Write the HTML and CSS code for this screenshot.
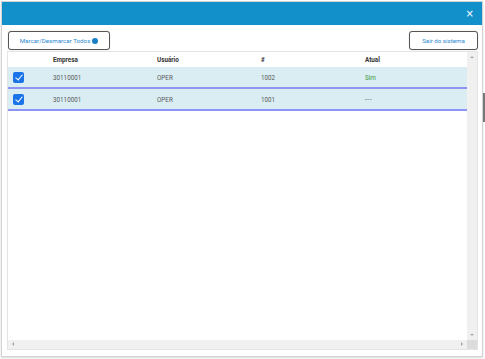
FILE: index.html
```html
<!DOCTYPE html>
<html lang="pt">
<head>
    <meta charset="UTF-8">
    <title>Sessões</title>
    <link rel="stylesheet" href="styles.css">
</head>
<body>
<div class="modal">
    <div class="modal-head">
        <span class="close">&times;</span>
    </div>
    <div class="modal-body">
        <div class="toolbar">
            <button class="btn">Marcar/Desmarcar Todos <span class="dot"></span></button>
            <button class="btn">Sair do sistema</button>
        </div>
        <div class="grid">
            <div class="grid-view">
                <table>
                    <thead>
                    <tr>
                        <th class="c-check"></th>
                        <th class="c-col">Empresa</th>
                        <th class="c-col">Usuário</th>
                        <th class="c-col">#</th>
                        <th>Atual</th>
                    </tr>
                    </thead>
                    <tbody>
                    <tr class="sel">
                        <td class="c-check"><span class="check"></span></td>
                        <td>30110001</td>
                        <td>OPER</td>
                        <td>1002</td>
                        <td class="yes">Sim</td>
                    </tr>
                    <tr class="sel">
                        <td class="c-check"><span class="check"></span></td>
                        <td>30110001</td>
                        <td>OPER</td>
                        <td>1001</td>
                        <td class="none">---</td>
                    </tr>
                    </tbody>
                </table>
            </div>
            <div class="vscroll"><span class="arr up"></span><span class="arr down"></span></div>
            <div class="hscroll"><span class="arr left"></span><span class="arr right"></span></div>
            <div class="corner"></div>
        </div>
    </div>
</div>
<div class="page-bar"></div>
</body>
</html>
```

FILE: styles.css
```css
html, body {
    margin: 0;
    padding: 0;
    background: #fff;
}
body {
    padding: 1px;
    font-family: Roboto, "Liberation Sans", sans-serif;
    position: relative;
    width: 485px;
    height: 359px;
    box-sizing: border-box;
}
.modal {
    width: 482px;
    height: 356px;
    box-sizing: border-box;
    border: 1px solid #d4d4d4;
    display: flex;
    flex-direction: column;
    box-shadow: 0 1px 2px rgba(0,0,0,.15);
}
.modal-head {
    height: 23px;
    background: #1190c9;
    display: flex;
    justify-content: flex-end;
    align-items: center;
    padding-right: 8px;
}
.close {
    color: #fff;
    font-size: 10px;
    line-height: 10px;
    font-family: "DejaVu Sans", sans-serif;
}
.modal-body {
    flex: 1;
    padding: 6px 4px 6px 5px;
    display: flex;
    flex-direction: column;
}
.toolbar {
    display: flex;
    justify-content: space-between;
    margin: 0 0 1px 1px;
}
.btn {
    height: 19px;
    border: 1px solid #555;
    border-radius: 3px;
    background: #fff;
    color: #2a8ad0;
    font: 400 6.2px Roboto, "Liberation Sans", sans-serif;
    padding: 0;
    white-space: nowrap;
    display: flex;
    align-items: center;
    justify-content: center;
    box-shadow: 0 0 1px rgba(0,0,0,.3);
}
.btn:first-child {
    width: 102px;
}
.btn:last-child {
    width: 69px;
}
.dot {
    display: inline-block;
    width: 6px;
    height: 6px;
    border-radius: 50%;
    background: #1a7fc4;
    margin-left: 2px;
}
.grid {
    flex: 1;
    border: 1px solid #e4e4e4;
    display: grid;
    grid-template-columns: 1fr 10px;
    grid-template-rows: 1fr 9px;
}
.grid-view {
    overflow: hidden;
}
table {
    width: 100%;
    border-collapse: collapse;
    font-size: 6.3px;
    color: #5a5a5a;
}
th {
    text-align: left;
    font-weight: 700;
    color: #333;
    height: 15px;
    padding: 0 0 0 5px;
}
td {
    height: 19px;
    padding: 1px 0 0 5px;
}
.c-check {
    width: 35px;
}
.c-col {
    width: 99px;
}
tr.sel td {
    background: #d9edf3;
    border-bottom: 2px solid #8c95f3;
}
.check {
    display: block;
    width: 11px;
    height: 11px;
    border-radius: 2px;
    background: #1a73e8;
    position: relative;
}
.check::after {
    content: "";
    position: absolute;
    left: 3.5px;
    top: 1px;
    width: 3px;
    height: 6px;
    border: solid #fff;
    border-width: 0 1.6px 1.6px 0;
    transform: rotate(40deg);
}
.yes {
    color: #3c9a3c;
}
.none {
    letter-spacing: 0.6px;
}
.vscroll, .hscroll, .corner {
    background: #f0f0f0;
    position: relative;
}
.corner {
    background: #dcdcdc;
}
.arr {
    position: absolute;
    width: 0;
    height: 0;
}
.up {
    top: 4px;
    left: 3px;
    border: 2px solid transparent;
    border-bottom: 2px solid #a3a3a3;
    border-top: 0;
}
.down {
    bottom: 4px;
    left: 3px;
    border: 2px solid transparent;
    border-top: 2px solid #a3a3a3;
    border-bottom: 0;
}
.left {
    left: 4px;
    top: 2px;
    border: 2px solid transparent;
    border-right: 2px solid #a3a3a3;
    border-left: 0;
}
.right {
    right: 4px;
    top: 2px;
    border: 2px solid transparent;
    border-left: 2px solid #a3a3a3;
    border-right: 0;
}
.page-bar {
    position: absolute;
    right: 0;
    top: 93px;
    width: 2px;
    height: 29px;
    background: #777;
}
```
